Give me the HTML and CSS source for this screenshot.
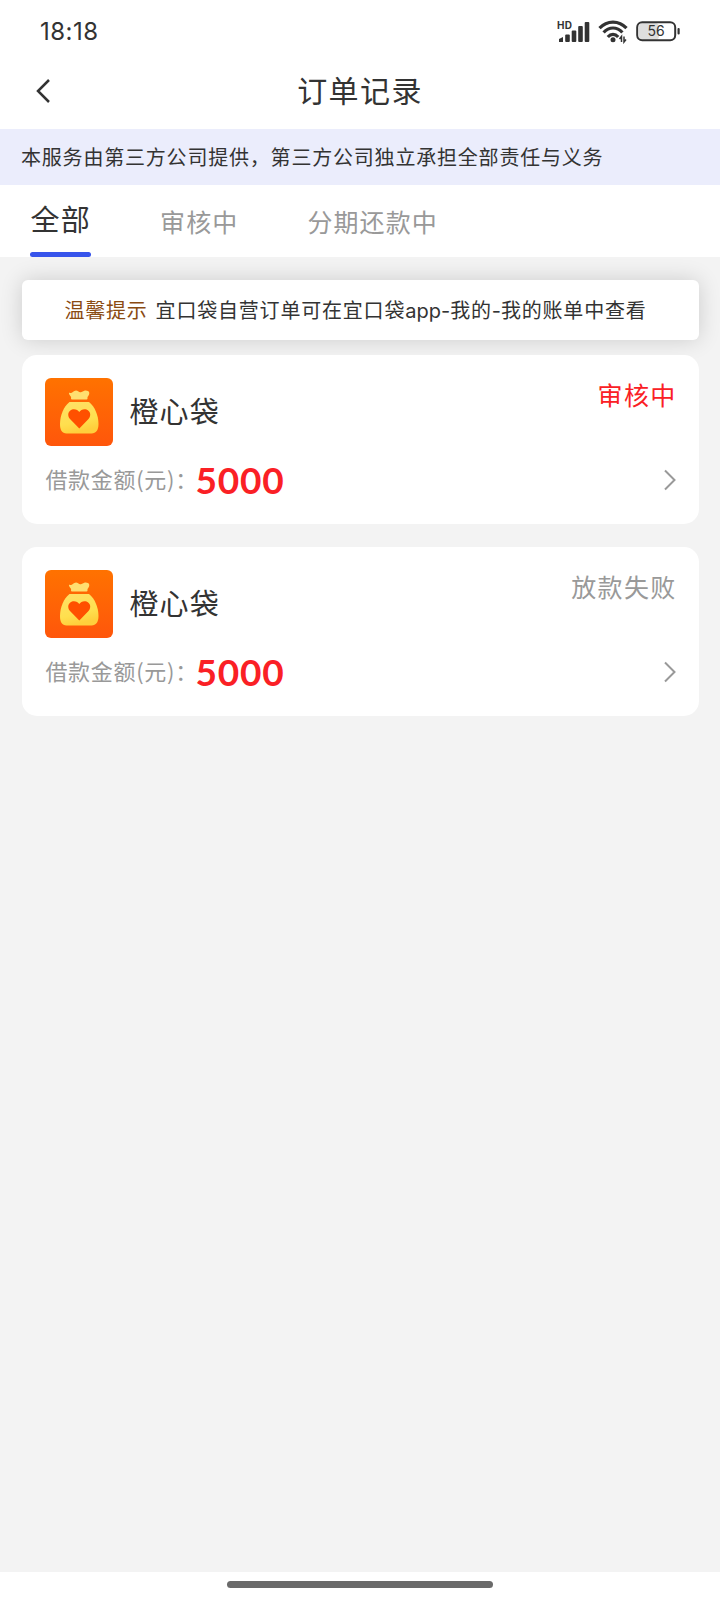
FILE: index.html
```html
<!DOCTYPE html>
<html lang="zh-CN">

<head>
    <meta charset="UTF-8">
    <meta name="viewport" content="width=device-width, initial-scale=1.0">
    <title>订单记录</title>
    <link rel="stylesheet" href="styles.css">
</head>

<body>
    <div class="status-bar">
        <span class="time">18:18</span>
        <div class="status-icons">
            <svg class="signal" width="34" height="24" viewBox="0 0 34 24">
                <text class="hd" x="0" y="8.500" textLength="15">HD</text>
                <g fill="#333">
                    <path d="M2 22V19L6 17V22Z" />
                    <rect x="8.200" y="14.500" width="4.600" height="7.500" rx="1" />
                    <rect x="14.700" y="10.500" width="4.600" height="11.500" rx="1" />
                    <rect x="21.200" y="6" width="4.600" height="16" rx="1" />
                    <rect x="27.700" y="2" width="4.600" height="20" rx="1" />
                </g>
            </svg>
            <svg class="wifi" width="30" height="24" viewBox="0 0 30 24">
                <g fill="none" stroke="#333" stroke-width="3.200">
                    <path d="M1.500 8.200C9 0 21 0 28.500 8.200" />
                    <path d="M5.600 12.500C11 6.500 19 6.500 24.400 12.500" />
                    <path d="M9.800 17C13 13.500 17 13.500 20.200 17" />
                </g>
                <circle cx="15" cy="19.800" r="2.500" fill="#333" />
                <path d="M23.500 22V16.500L21.500 19M26 16.500V22L28 19.500" fill="none" stroke="#333" stroke-width="1.500" />
            </svg>
            <svg class="battery" width="44" height="24" viewBox="0 0 44 24">
                <rect x="3" y="3" width="20" height="17" rx="4" fill="#dedede" />
                <rect x="1.200" y="2.200" width="38" height="18" rx="5" fill="none" stroke="#333" stroke-width="2" />
                <rect x="41.500" y="8" width="2.200" height="6.500" rx="1" fill="#333" />
                <text class="percent" x="20.200" y="16.300" text-anchor="middle">56</text>
            </svg>
        </div>
    </div>

    <header class="nav">
        <svg class="back" width="16" height="26" viewBox="0 0 16 26">
            <path d="M14 2L3 13L14 24" fill="none" stroke="#333" stroke-width="2.500" />
        </svg>
        <h1>订单记录</h1>
    </header>

    <div class="notice">本服务由第三方公司提供，第三方公司独立承担全部责任与义务</div>

    <div class="tabs">
        <div class="tab active">全部</div>
        <div class="tab">审核中</div>
        <div class="tab">分期还款中</div>
    </div>

    <main>
        <div class="tip"><span>温馨提示</span>宜口袋自营订单可在宜口袋<b>app-</b>我的<b>-</b>我的账单中查看</div>

        <div class="card">
            <div class="card-top">
                <svg class="logo" width="68" height="68" viewBox="0 0 68 68">
                    <defs>
                        <linearGradient id="orange" x1="0" y1="0" x2="0" y2="1">
                            <stop offset="0" stop-color="#ff7200" />
                            <stop offset="1" stop-color="#ff560b" />
                        </linearGradient>
                        <linearGradient id="gold" x1="0" y1="0" x2="0.300" y2="1">
                            <stop offset="0" stop-color="#ffe168" />
                            <stop offset="0.700" stop-color="#ffdf4e" />
                            <stop offset="1" stop-color="#ffcf3c" />
                        </linearGradient>
                    </defs>
                    <rect width="68" height="68" rx="6" fill="url(#orange)" />
                    <path d="M24 14.500C27 16.500 28 12.500 31 12.500C33 12.500 34 15 36.500 14C39 12.500 41 12 43 13C45 14 44.500 17 42.500 19V20.500Q42.500 21.500 41.500 21.500H27Q26 21.500 26 20.500C27 18 23.500 17.500 24 14.500Z" fill="#ffdf70" />
                    <path d="M24.500 24H44C50 28.500 53.500 38 53.500 46C53.500 52 51 55.500 46.500 55.500H21.500C17 55.500 15 52 15 46C15 38 18.500 28.500 24.500 24Z" fill="url(#gold)" />
                    <path d="M34.300 50.500L25 41C22 37.500 23 33 27 31.500C30 30.500 33 32 34.300 34C35.600 32 38.500 30.500 41.500 31.500C45.500 33 46.500 37.500 43.500 41Z" fill="#ff5000" />
                </svg>
                <span class="name">橙心袋</span>
                <span class="state red">审核中</span>
            </div>
            <div class="card-bottom">
                <span class="label">借款金额(元)：</span>
                <span class="amount">5000</span>
                <svg class="arrow" width="14" height="22" viewBox="0 0 14 22">
                    <path d="M2 1.500L11.500 11L2 20.500" fill="none" stroke="#999" stroke-width="2" />
                </svg>
            </div>
        </div>

        <div class="card">
            <div class="card-top">
                <svg class="logo" width="68" height="68" viewBox="0 0 68 68">
                    <rect width="68" height="68" rx="6" fill="url(#orange)" />
                    <path d="M24 14.500C27 16.500 28 12.500 31 12.500C33 12.500 34 15 36.500 14C39 12.500 41 12 43 13C45 14 44.500 17 42.500 19V20.500Q42.500 21.500 41.500 21.500H27Q26 21.500 26 20.500C27 18 23.500 17.500 24 14.500Z" fill="#ffdf70" />
                    <path d="M24.500 24H44C50 28.500 53.500 38 53.500 46C53.500 52 51 55.500 46.500 55.500H21.500C17 55.500 15 52 15 46C15 38 18.500 28.500 24.500 24Z" fill="url(#gold)" />
                    <path d="M34.300 50.500L25 41C22 37.500 23 33 27 31.500C30 30.500 33 32 34.300 34C35.600 32 38.500 30.500 41.500 31.500C45.500 33 46.500 37.500 43.500 41Z" fill="#ff5000" />
                </svg>
                <span class="name">橙心袋</span>
                <span class="state">放款失败</span>
            </div>
            <div class="card-bottom">
                <span class="label">借款金额(元)：</span>
                <span class="amount">5000</span>
                <svg class="arrow" width="14" height="22" viewBox="0 0 14 22">
                    <path d="M2 1.500L11.500 11L2 20.500" fill="none" stroke="#999" stroke-width="2" />
                </svg>
            </div>
        </div>
    </main>

    <div class="home-bar"><i></i></div>
</body>

</html>
```
FILE: styles.css
```css
* {
    box-sizing: border-box;
}

body {
    display: flex;
    flex-direction: column;
    margin: 0;
    height: 1600px;
    background-color: #fff;
    color: #333;
    font-family: "Noto Sans CJK SC", sans-serif;
    white-space: nowrap;
}

svg {
    display: block;
    flex: none;
}

.status-bar {
    display: flex;
    justify-content: space-between;
    align-items: center;
    height: 62px;
    padding: 2px 40.5px 0 40px;
}

.time {
    font: 24px/24px Inter, sans-serif;
    letter-spacing: 0.5px;
}

.status-icons {
    display: flex;
    gap: 7.5px;
}

.hd {
    font: bold 10px Inter, sans-serif;
    fill: #333;
}

.percent {
    font: 14px Inter, sans-serif;
    fill: #333;
}

.nav {
    display: flex;
    align-items: center;
    height: 67px;
    padding: 0 35px 9px;
}

.nav h1 {
    flex: 1;
    margin: 0 16px 5px 0;
    font-size: 30px;
    font-weight: 400;
    line-height: 40px;
    letter-spacing: 1.4px;
    text-align: center;
}

.notice {
    height: 56px;
    padding-left: 21px;
    background-color: #ebedfc;
    font-size: 20px;
    line-height: 56px;
    letter-spacing: 0.8px;
}

.tabs {
    display: flex;
    gap: 69px;
    height: 72px;
    padding-left: 30px;
}

.tab {
    color: #999;
    font-size: 25px;
    line-height: 72px;
    letter-spacing: 1.1px;
}

.tab.active {
    display: flex;
    flex-direction: column;
    color: #333;
    font-size: 29px;
    line-height: 67px;
    letter-spacing: 1.3px;
    text-indent: 0.5px;
}

.tab.active::after {
    content: "";
    height: 5px;
    border-radius: 3px;
    background-color: #3754eb;
}

main {
    flex: 1;
    padding: 23px 21.5px 0 22.4px;
    background-color: #f3f3f3;
}

.tip {
    height: 60px;
    margin-bottom: 15px;
    padding-left: 42px;
    border-radius: 6px;
    background-color: #fff;
    box-shadow: 0 0 22px rgba(0, 0, 0, 0.16);
    font-size: 20px;
    line-height: 60px;
    letter-spacing: 0.8px;
}

.tip span {
    margin-right: 8px;
    color: #8a4b12;
}

.tip b {
    font-family: Inter, sans-serif;
    font-weight: 400;
    letter-spacing: 0;
}

.card {
    position: relative;
    height: 169px;
    margin-bottom: 23px;
    padding: 22.5px 22px 22px 23px;
    border-radius: 15px;
    background-color: #fff;
}

.card-top {
    display: flex;
    align-items: center;
    height: 68px;
}

.name {
    margin: 0 0 4px 16px;
    font-size: 29px;
    line-height: 40px;
    letter-spacing: 1.2px;
}

.state {
    align-self: flex-start;
    margin-left: auto;
    color: #999;
    font-size: 25px;
    line-height: 32px;
    letter-spacing: 1.3px;
}

.state.red {
    color: #fa2025;
}

.card-bottom {
    display: flex;
    align-items: center;
    height: 68px;
}

.label {
    width: 150px;
    padding-bottom: 4px;
    color: #999;
    font-size: 22px;
    letter-spacing: 0.7px;
}

.amount {
    color: #fa2025;
    font: bold 37px/40px Lato, sans-serif;
    letter-spacing: 0.8px;
}

.arrow {
    margin-left: auto;
}

.home-bar {
    display: flex;
    justify-content: center;
    height: 28px;
    padding-top: 9px;
}

.home-bar i {
    width: 266px;
    height: 6.5px;
    border-radius: 4px;
    background-color: #6a6a6a;
}
```
